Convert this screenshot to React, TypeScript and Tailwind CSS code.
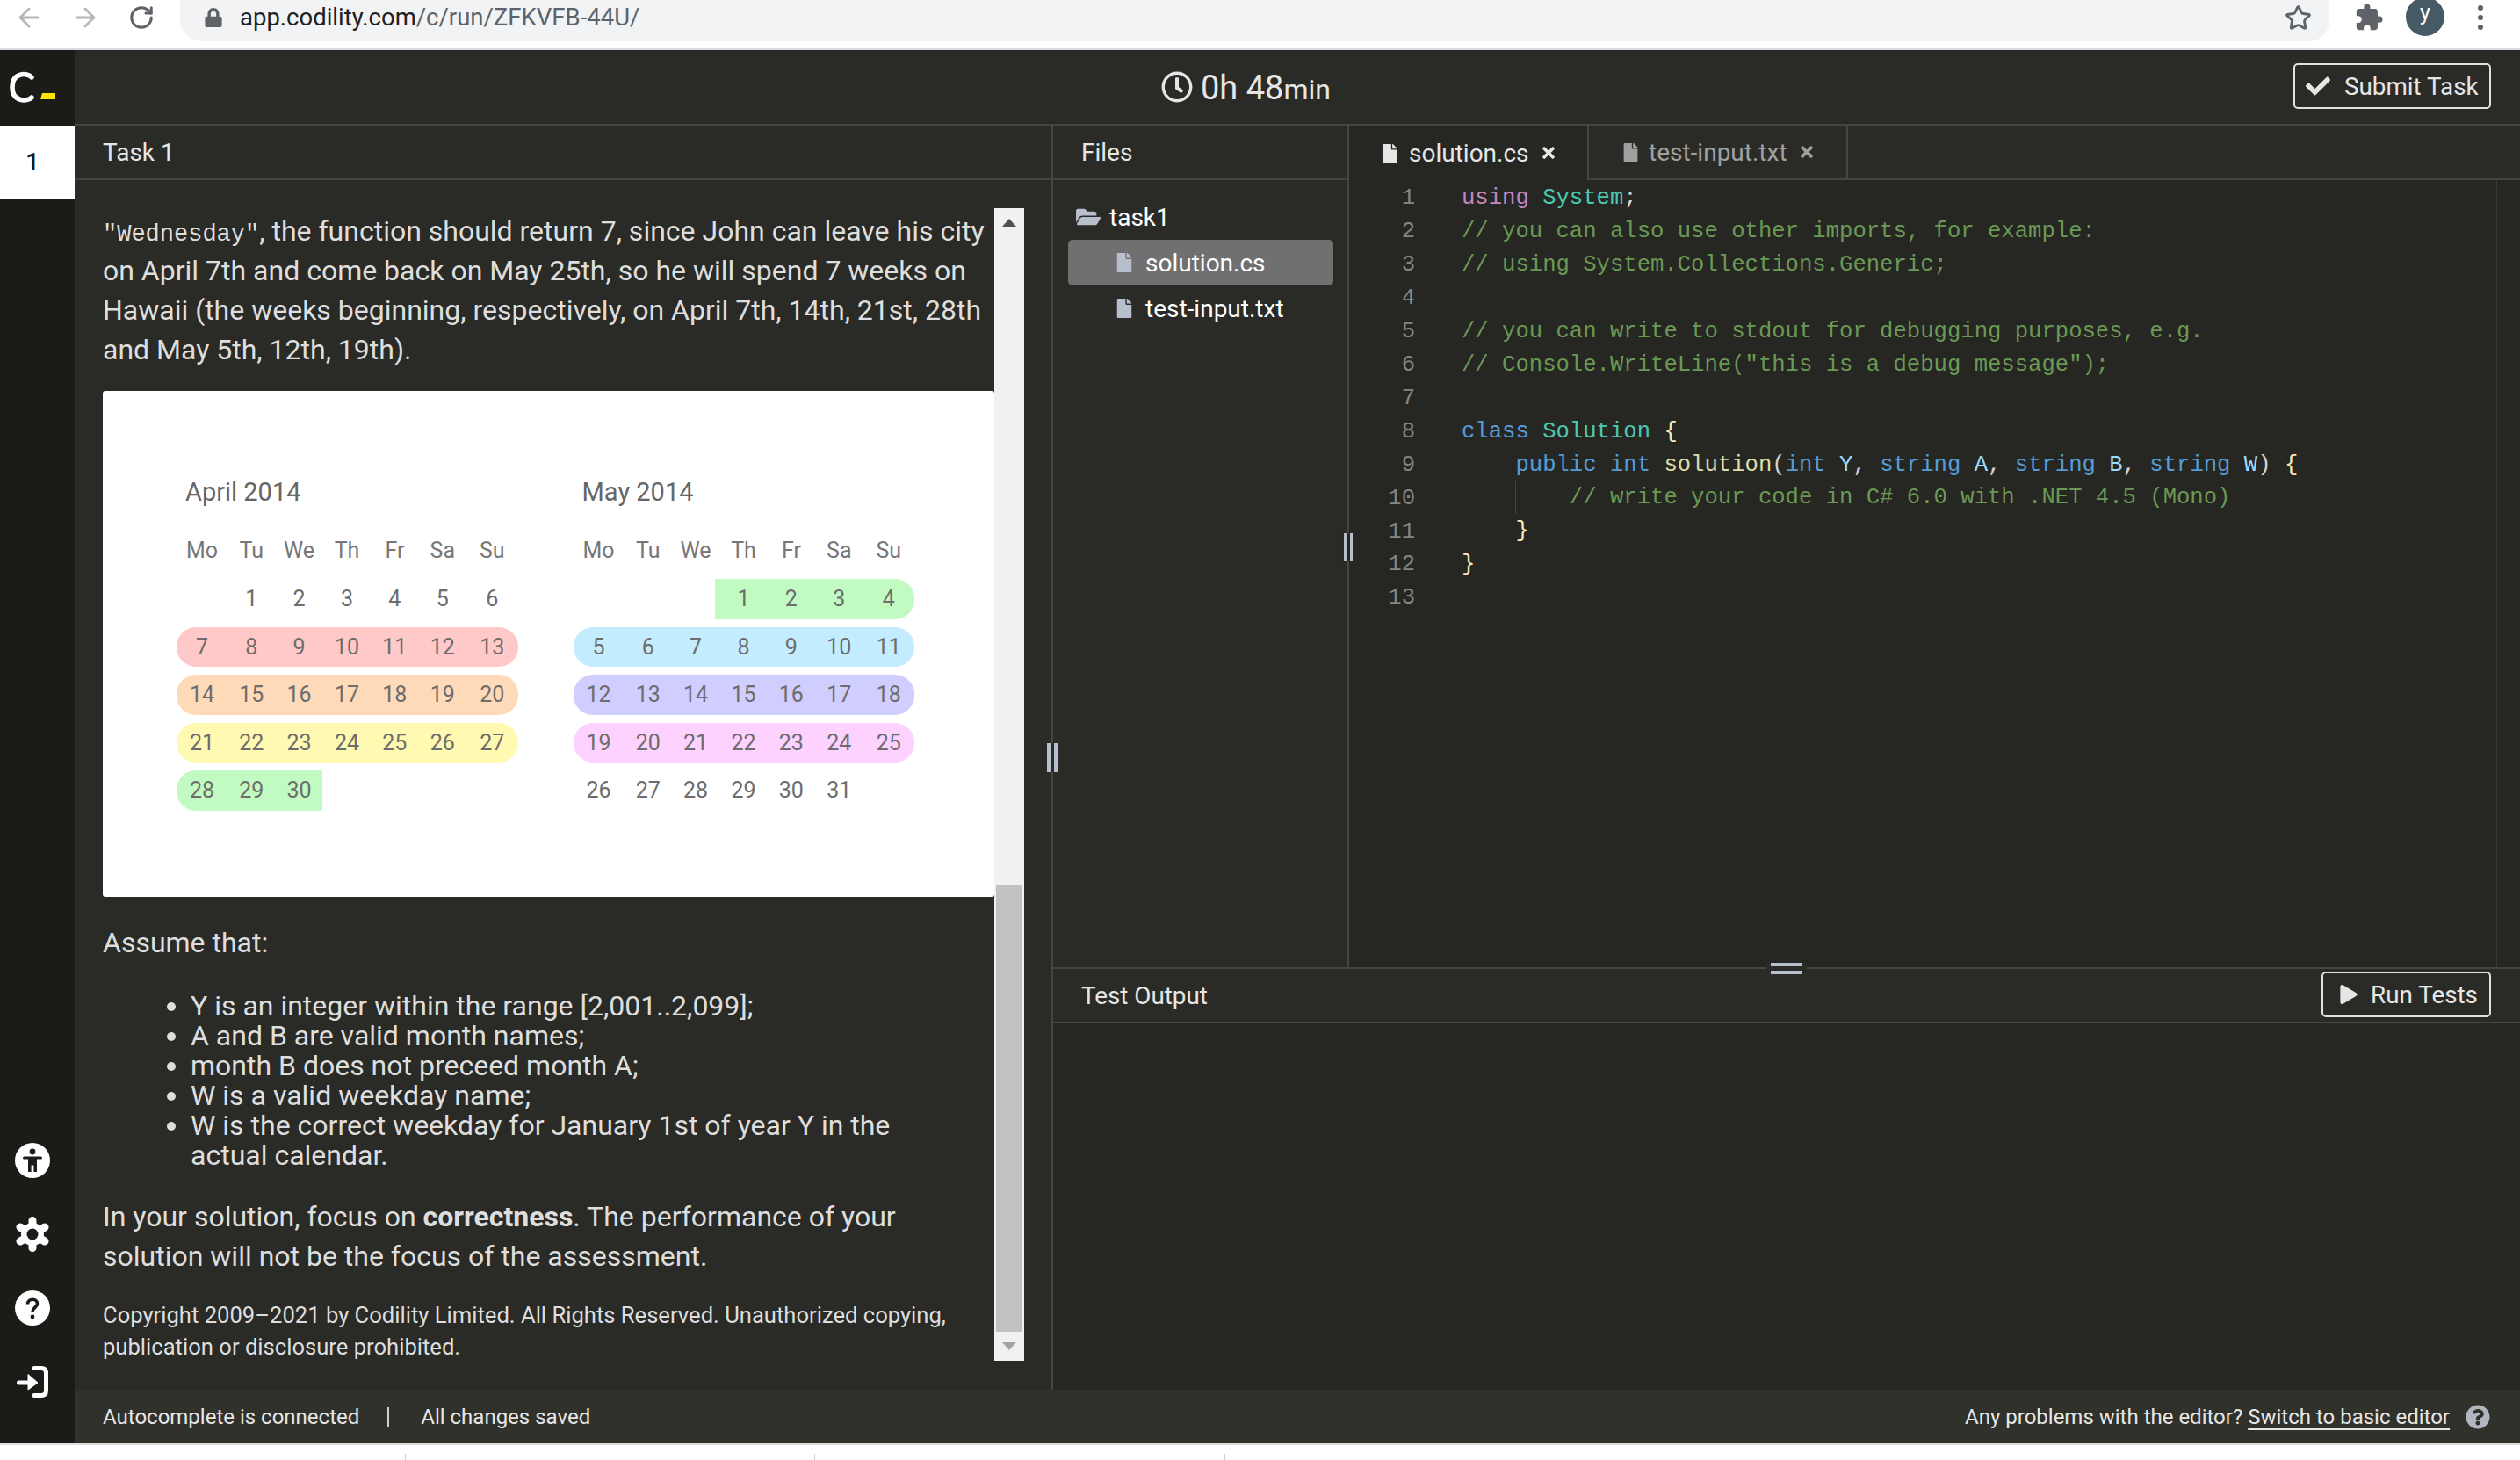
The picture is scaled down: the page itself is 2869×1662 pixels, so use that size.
import { ArrowLeft, ArrowRight, RotateCw, Star } from "lucide-react";
import { FaCheck, FaRegClock, FaTimes, FaFile, FaFolderOpen, FaLock, FaPlay, FaQuestionCircle } from "react-icons/fa";
import { MdExtension } from "react-icons/md";

const days = ["Mo", "Tu", "We", "Th", "Fr", "Sa", "Su"];

const april = [
    { cells: ["", "1", "2", "3", "4", "5", "6"], bg: "" },
    { cells: ["7", "8", "9", "10", "11", "12", "13"], bg: "left-0 w-full bg-[#ffc9c9] rounded-[22px]" },
    { cells: ["14", "15", "16", "17", "18", "19", "20"], bg: "left-0 w-full bg-[#ffdab9] rounded-[22px]" },
    { cells: ["21", "22", "23", "24", "25", "26", "27"], bg: "left-0 w-full bg-[#fff9b1] rounded-[22px]" },
    { cells: ["28", "29", "30", "", "", "", ""], bg: "left-0 w-[166px] bg-[#c1fbc1] rounded-l-[22px]" },
];

const may = [
    { cells: ["", "", "", "1", "2", "3", "4"], bg: "right-0 w-[227px] bg-[#c1fbc1] rounded-r-[22px]" },
    { cells: ["5", "6", "7", "8", "9", "10", "11"], bg: "left-0 w-full bg-[#c4ecff] rounded-[22px]" },
    { cells: ["12", "13", "14", "15", "16", "17", "18"], bg: "left-0 w-full bg-[#d0cdff] rounded-[22px]" },
    { cells: ["19", "20", "21", "22", "23", "24", "25"], bg: "left-0 w-full bg-[#fdd2ff] rounded-[22px]" },
    { cells: ["26", "27", "28", "29", "30", "31", ""], bg: "" },
];

const grid = "grid grid-cols-[58px_repeat(5,54.4px)_58.5px] w-[388.5px] text-center";

function Month({ title, rows }: { title: string; rows: { cells: string[]; bg: string }[] }) {
    return <div className="w-[388.5px]">
        <div className="pl-[10px] text-[29px] leading-[40px] text-[#666]">{title}</div>
        <div className={`${grid} mt-[27px] text-[25px] leading-[40px] text-[#777]`}>
            {days.map(d => <div key={d}>{d}</div>)}
        </div>
        <div className="mt-[12px] flex flex-col gap-[9.1px]">
            {rows.map((row, i) => <div key={i} className="relative h-[45.5px]">
                {row.bg && <div className={`absolute inset-y-0 ${row.bg}`} />}
                <div className={`${grid} relative text-[25px] leading-[45.5px] text-[#6d6d6d]`}>
                    {row.cells.map((c, j) => <div key={j}>{c}</div>)}
                </div>
            </div>)}
        </div>
    </div>
}

const C = {
    kw: "text-[#569cd6]",
    pink: "text-[#c586c0]",
    type: "text-[#4ec9b0]",
    com: "text-[#6a9955]",
    fn: "text-[#dcdcaa]",
    par: "text-[#9cdcfe]",
    pun: "text-[#d4d4d4]",
    brace: "text-[#ffe9b8]",
};

const code: [string, string][][] = [
    [[C.pink, "using"], [C.pun, " "], [C.type, "System"], [C.pun, ";"]],
    [[C.com, "// you can also use other imports, for example:"]],
    [[C.com, "// using System.Collections.Generic;"]],
    [],
    [[C.com, "// you can write to stdout for debugging purposes, e.g."]],
    [[C.com, "// Console.WriteLine(\"this is a debug message\");"]],
    [],
    [[C.kw, "class"], [C.pun, " "], [C.type, "Solution"], [C.pun, " "], [C.brace, "{"]],
    [[C.pun, "    "], [C.kw, "public"], [C.pun, " "], [C.kw, "int"], [C.pun, " "], [C.fn, "solution"], [C.pun, "("], [C.kw, "int"], [C.pun, " "], [C.par, "Y"], [C.pun, ", "], [C.kw, "string"], [C.pun, " "], [C.par, "A"], [C.pun, ", "], [C.kw, "string"], [C.pun, " "], [C.par, "B"], [C.pun, ", "], [C.kw, "string"], [C.pun, " "], [C.par, "W"], [C.pun, ") "], [C.brace, "{"]],
    [[C.com, "        // write your code in C# 6.0 with .NET 4.5 (Mono)"]],
    [[C.brace, "    }"]],
    [[C.brace, "}"]],
    [],
];

function BrowserBar() {
    return <div className="h-[57px] shrink-0 bg-white border-b-2 border-[#dadce0] flex items-start text-[#5f6368]">
        <div className="h-[40px] flex items-center w-[205px] pl-[16px] gap-[30px]">
            <ArrowLeft size={34} strokeWidth={2} className="text-[#b4b6ba]" />
            <ArrowRight size={34} strokeWidth={2} className="text-[#b4b6ba]" />
            <RotateCw size={30} strokeWidth={2.4} className="ml-[2px]" />
        </div>
        <div className="w-[2447px] h-[47px] bg-[#f1f3f4] rounded-b-[24px] flex items-center pl-[27px] pb-[7px]">
            <FaLock size={22} className="text-[#5f6368]" />
            <span className="ml-[19px] text-[27.5px] text-[#202124]">app.codility.com<span className="text-[#5f6368]">/c/run/ZFKVFB-44U/</span></span>
            <Star size={31} strokeWidth={2.2} className="ml-auto mr-[20px] text-[#5f6368]" />
        </div>
        <div className="h-[40px] flex items-center">
            <MdExtension size={34} className="ml-[28px]" />
            <div className="ml-[25px] -mt-[3px] w-[44px] h-[44px] rounded-full bg-[#455a64] text-white text-[25px] leading-[36px] text-center">y</div>
            <div className="ml-[38px] flex flex-col gap-[5px]">
                <div className="w-[6px] h-[6px] rounded-full bg-[#5f6368]" />
                <div className="w-[6px] h-[6px] rounded-full bg-[#5f6368]" />
                <div className="w-[6px] h-[6px] rounded-full bg-[#5f6368]" />
            </div>
        </div>
    </div>
}

function Sidebar() {
    return <div className="w-[85px] shrink-0 bg-[#1b1c18] flex flex-col text-white">
        <div className="h-[86px] flex items-start pl-[11px] pt-[24px]">
            <svg width="55" height="37" viewBox="0 0 55 37">
                <path d="M25 7 C20 1.5 3 1 3 18.5 C3 35 20 35 25 30" fill="none" stroke="#fff" strokeWidth="5.5" strokeLinecap="round" />
                <path d="M37 25 H52 V32 H35 Z" fill="#ffe600" />
            </svg>
        </div>
        <div className="h-[84px] bg-white text-[#1b1c18] text-[27px] font-medium flex items-center justify-center pr-[11px]">1</div>
        <div className="mt-auto w-[74px] flex flex-col items-center gap-[44px] pb-[50px]">
            <svg width="40" height="40" viewBox="0 0 40 40">
                <circle cx="20" cy="20" r="20" fill="#fff" />
                <circle cx="20" cy="10" r="3.4" fill="#1b1c18" />
                <rect x="9" y="15.5" width="22" height="3" rx="1.5" fill="#1b1c18" />
                <path d="M15 16 H25 V33 H21.4 V25.5 H18.6 V33 H15 Z" fill="#1b1c18" />
            </svg>
            <svg width="40" height="40" viewBox="0 0 40 40">
                <g stroke="#fff" strokeWidth="9" strokeLinecap="round">
                    <line x1="20" y1="4.5" x2="20" y2="35.5" />
                    <line x1="6" y1="12" x2="34" y2="28" />
                    <line x1="6" y1="28" x2="34" y2="12" />
                </g>
                <circle cx="20" cy="20" r="13" fill="#fff" />
                <circle cx="20" cy="20" r="6.5" fill="#1b1c18" />
            </svg>
            <svg width="40" height="40" viewBox="0 0 40 40">
                <circle cx="20" cy="20" r="20" fill="#fff" />
                <path d="M14.5 15.5 C14.5 8.5 25.5 8.5 25.5 15 C25.5 19 20 19.5 20 24.5" fill="none" stroke="#1b1c18" strokeWidth="3.6" />
                <circle cx="20" cy="30" r="2.4" fill="#1b1c18" />
            </svg>
            <svg width="40" height="40" viewBox="-2 -2 40 40">
                <path d="M20 2.5 H28 Q33.5 2.5 33.5 8 V28 Q33.5 33.5 28 33.5 H20" fill="none" stroke="#fff" strokeWidth="5" strokeLinecap="round" />
                <path d="M2.5 19 H14" fill="none" stroke="#fff" strokeWidth="5" strokeLinecap="round" />
                <path d="M13 9.5 L24 19 L13 27 Z" fill="#fff" stroke="#fff" strokeWidth="1" strokeLinejoin="round" />
            </svg>
        </div>
    </div>
}

function Description() {
    return <div className="flex-1 min-h-0 flex">
        <div className="w-[1047px] shrink-0 pl-[32px] pt-[36px] text-[32px] leading-[45px] text-[#dedede]">
            <p><span className="font-['Liberation_Mono',monospace] text-[27px] leading-none">"Wednesday"</span>, the function should return 7, since John can leave his city on April 7th and come back on May 25th, so he will spend 7 weeks on Hawaii (the weeks beginning, respectively, on April 7th, 14th, 21st, 28th and May 5th, 12th, 19th).</p>
            <div className="mt-[24px] h-[576px] bg-white rounded-[3px] flex gap-[63px] pl-[84px] pt-[95px]">
                <Month title="April 2014" rows={april} />
                <Month title="May 2014" rows={may} />
            </div>
            <p className="mt-[30px]">Assume that:</p>
            <ul className="mt-[32px] pl-[100px] pr-[70px] list-disc leading-[34px]">
                <li>Y is an integer within the range [2,001..2,099];</li>
                <li>A and B are valid month names;</li>
                <li>month B does not preceed month A;</li>
                <li>W is a valid weekday name;</li>
                <li>W is the correct weekday for January 1st of year Y in the actual calendar.</li>
            </ul>
            <p className="mt-[31px]">In your solution, focus on <b className="font-bold">correctness</b>. The performance of your solution will not be the focus of the assessment.</p>
            <p className="mt-[26px] text-[25.6px] leading-[36px]">Copyright 2009–2021 by Codility Limited. All Rights Reserved. Unauthorized copying, publication or disclosure prohibited.</p>
        </div>
        <div className="mt-[32px] w-[34px] h-[1312px] bg-[#f1f1f1] flex flex-col">
            <div className="h-[33px] flex items-center justify-center">
                <div className="border-x-[8px] border-x-transparent border-b-[9px] border-b-[#505050]" />
            </div>
            <div className="mt-[738px] mx-[2px] flex-1 bg-[#c1c1c1]" />
            <div className="h-[33px] flex items-center justify-center">
                <div className="border-x-[8px] border-x-transparent border-t-[9px] border-t-[#a3a3a3]" />
            </div>
        </div>
    </div>
}

function FileRow({ name, active }: { name: string; active?: boolean }) {
    return <div className={`h-[52px] ml-[17px] mr-[16px] rounded-[5px] flex items-center pl-[53px] text-white ${active ? "bg-[#707070]" : ""}`}>
        <FaFile size={22} className="text-[#b8bfcc]" />
        <span className="ml-[13px] pt-[2px]">{name}</span>
    </div>
}

function Editor() {
    return <div className="flex-1 min-w-0 flex flex-col bg-[#262722]">
        <div className="h-[62px] shrink-0 flex bg-[#2a2b26] text-[28px]">
            <div className="w-[273px] bg-[#262722] border-r-2 border-[#45463f] flex items-center pl-[36px] text-[#e6e6e6]">
                <FaFile size={21} />
                <span className="ml-[11px] pt-[2px]">solution.cs</span>
                <FaTimes size={20} className="ml-[12px]" />
            </div>
            <div className="w-[295px] border-r-2 border-b-2 border-[#45463f] flex items-center pl-[37px] text-[#a0a0a0]">
                <FaFile size={21} />
                <span className="ml-[10px] pt-[2px]">test-input.txt</span>
                <FaTimes size={20} className="ml-[12px]" />
            </div>
            <div className="flex-1 border-b-2 border-[#45463f]" />
        </div>
        <div className="relative flex-1 pt-[2px] flex font-['Liberation_Mono',monospace] text-[25.6px] leading-[37.95px] whitespace-pre">
            <div className="w-[75px] text-right text-[#858585]">
                {code.map((_, i) => <div key={i}>{i + 1}</div>)}
            </div>
            <div className="ml-[53px]">
                {code.map((line, i) => <div key={i} className="h-[37.95px]">
                    {line.map(([color, text], j) => <span key={j} className={color}>{text}</span>)}
                </div>)}
            </div>
            <div className="absolute left-[128px] top-[304px] h-[114px] w-px bg-[#45463f]" />
            <div className="absolute left-[189px] top-[342px] h-[38px] w-px bg-[#45463f]" />
            <div className="absolute right-[26px] top-0 bottom-0 w-px bg-[#3a3b35]" />
        </div>
    </div>
}

export default function App() {
    return <div className="w-[2869px] h-[1662px] overflow-hidden bg-white flex flex-col font-['Roboto',sans-serif]">
        <BrowserBar />
        <div className="h-[1586px] shrink-0 flex">
            <Sidebar />
            <div className="flex-1 min-w-0 flex flex-col bg-[#2a2b26] text-[#e6e6e6]">
                <div className="h-[86px] shrink-0 border-b-2 border-[#45463f] flex items-center relative">
                    <div className="ml-[1237px] flex items-center">
                        <FaRegClock size={36} />
                        <span className="ml-[9px] pt-[3px] text-[38px]">0h 48<span className="text-[32px]">min</span></span>
                    </div>
                    <button className="ml-auto mr-[33px] mb-[2px] w-[225px] h-[52px] border-2 border-[#e0e0e0] rounded-[5px] flex items-center pl-[12px] text-[27.8px]">
                        <FaCheck size={28} />
                        <span className="ml-[16px] pt-[2px]">Submit Task</span>
                    </button>
                </div>
                <div className="flex-1 min-h-0 flex">
                    <div className="w-[1114px] shrink-0 border-r-2 border-[#45463f] flex flex-col relative">
                        <div className="h-[62px] shrink-0 border-b-2 border-[#45463f] flex items-center pl-[32px] pt-[2px] text-[28px]">Task 1</div>
                        <Description />
                        <div className="absolute -right-[7px] top-[703px] w-[12px] h-[33px] bg-[#2a2b26] flex justify-between">
                            <div className="w-[4px] bg-[#b8bfcc]" />
                            <div className="w-[4px] bg-[#b8bfcc]" />
                        </div>
                    </div>
                    <div className="flex-1 min-w-0 flex flex-col">
                        <div className="h-[958px] shrink-0 flex relative">
                            <div className="w-[337px] shrink-0 border-r-2 border-[#45463f] text-[28px]">
                                <div className="h-[62px] border-b-2 border-[#45463f] flex items-center pl-[32px] pt-[2px]">Files</div>
                                <div className="mt-[16px] h-[52px] flex items-center pl-[26px] text-white">
                                    <FaFolderOpen size={28} className="text-[#b8bfcc]" />
                                    <span className="ml-[10px] pt-[2px]">task1</span>
                                </div>
                                <FileRow name="solution.cs" active />
                                <FileRow name="test-input.txt" />
                            </div>
                            <Editor />
                            <div className="absolute left-[330px] top-[464px] w-[12px] h-[32px] bg-[#262722] flex justify-between px-[1px]">
                                <div className="w-[3px] bg-[#b8bfcc]" />
                                <div className="w-[3px] bg-[#b8bfcc]" />
                            </div>
                        </div>
                        <div className="flex-1 min-h-0 flex flex-col border-t-2 border-[#45463f] relative">
                            <div className="absolute left-[812px] -top-[7px] w-[46px] h-[13px] bg-[#2a2b26] flex flex-col justify-between px-[5px]">
                                <div className="h-[4px] bg-[#b8bfcc]" />
                                <div className="h-[4px] bg-[#b8bfcc]" />
                            </div>
                            <div className="h-[62px] shrink-0 border-b-2 border-[#45463f] flex items-center pl-[32px] pr-[33px] text-[27.8px]">
                                <span className="pt-[2px]">Test Output</span>
                                <button className="ml-auto mb-[2px] w-[193px] h-[52px] border-2 border-[#e0e0e0] rounded-[5px] flex items-center pl-[18px]">
                                    <FaPlay size={22} />
                                    <span className="ml-[14px] pt-[2px]">Run Tests</span>
                                </button>
                            </div>
                            <div className="flex-1 bg-[#272822]" />
                        </div>
                    </div>
                </div>
                <div className="h-[61px] shrink-0 bg-[#30312a] flex items-center pl-[32px] pr-[34px] text-[24px]">
                    <span>Autocomplete is connected</span>
                    <span className="ml-[32px] w-[2px] h-[22px] bg-[#d0d0d0]" />
                    <span className="ml-[36px]">All changes saved</span>
                    <span className="ml-auto">Any problems with the editor? <span className="underline underline-offset-[5px] decoration-2">Switch to basic editor</span></span>
                    <FaQuestionCircle size={28} className="ml-[18px] text-[#b0b5c0]" />
                </div>
            </div>
        </div>
        <div className="flex-1 border-t-2 border-[#dedede] relative">
            <div className="absolute left-[461px] bottom-0 h-[7px] w-px bg-[#cfcfcf]" />
            <div className="absolute left-[927px] bottom-0 h-[7px] w-px bg-[#cfcfcf]" />
            <div className="absolute left-[1394px] bottom-0 h-[7px] w-px bg-[#cfcfcf]" />
        </div>
    </div>
}
